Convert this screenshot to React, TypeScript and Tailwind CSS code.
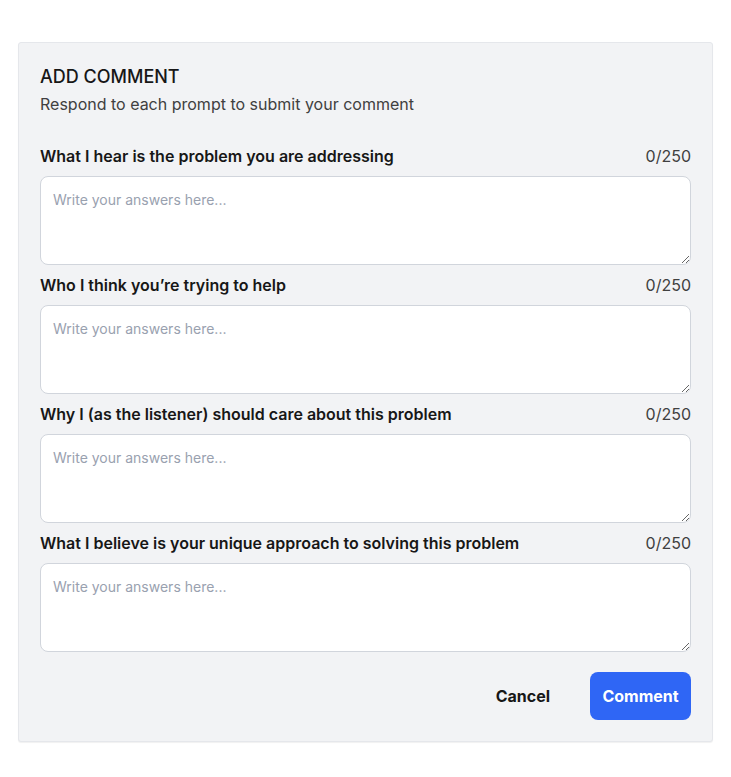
import React from "react"

const prompts = [
  "What I hear is the problem you are addressing",
  "Who I think you’re trying to help",
  "Why I (as the listener) should care about this problem",
  "What I believe is your unique approach to solving this problem",
]

export default function App() {
  return (
    <div className="min-h-screen bg-white px-[18px] pt-[42px] pb-9 font-['Inter',sans-serif] text-neutral-900">
      <div className="rounded-[3px] border border-gray-200 bg-[#f2f3f5] p-[21px] shadow-[0_1px_1px_rgba(0,0,0,0.06)]">
        <h2 className="text-lg leading-[26px] font-medium text-neutral-900">ADD COMMENT</h2>
        <p className="text-base leading-6 text-neutral-700 mt-[2px]">Respond to each prompt to submit your comment</p>

        <div className="mt-[30px] flex flex-col gap-[10px]">
          {prompts.map((p, i) => (
            <div key={i} className="flex flex-col gap-[10px]">
              <div className="flex items-center justify-between h-5">
                <label className="text-base font-semibold text-neutral-900">{p}</label>
                <span className="text-base text-neutral-700">0/250</span>
              </div>
              <textarea
                placeholder="Write your answers here..."
                className="h-[89px] w-full rounded-lg border border-gray-300 bg-white px-3 py-[13px] text-sm leading-5 placeholder:text-gray-400 outline-none"
              />
            </div>
          ))}
        </div>

        <div className="mt-5 flex items-center justify-end gap-[40px]">
          <button className="text-base font-bold text-neutral-900">Cancel</button>
          <button className="h-12 w-[101px] rounded-lg bg-[#2f66f5] text-base font-bold text-white">Comment</button>
        </div>
      </div>
    </div>
  )
}
